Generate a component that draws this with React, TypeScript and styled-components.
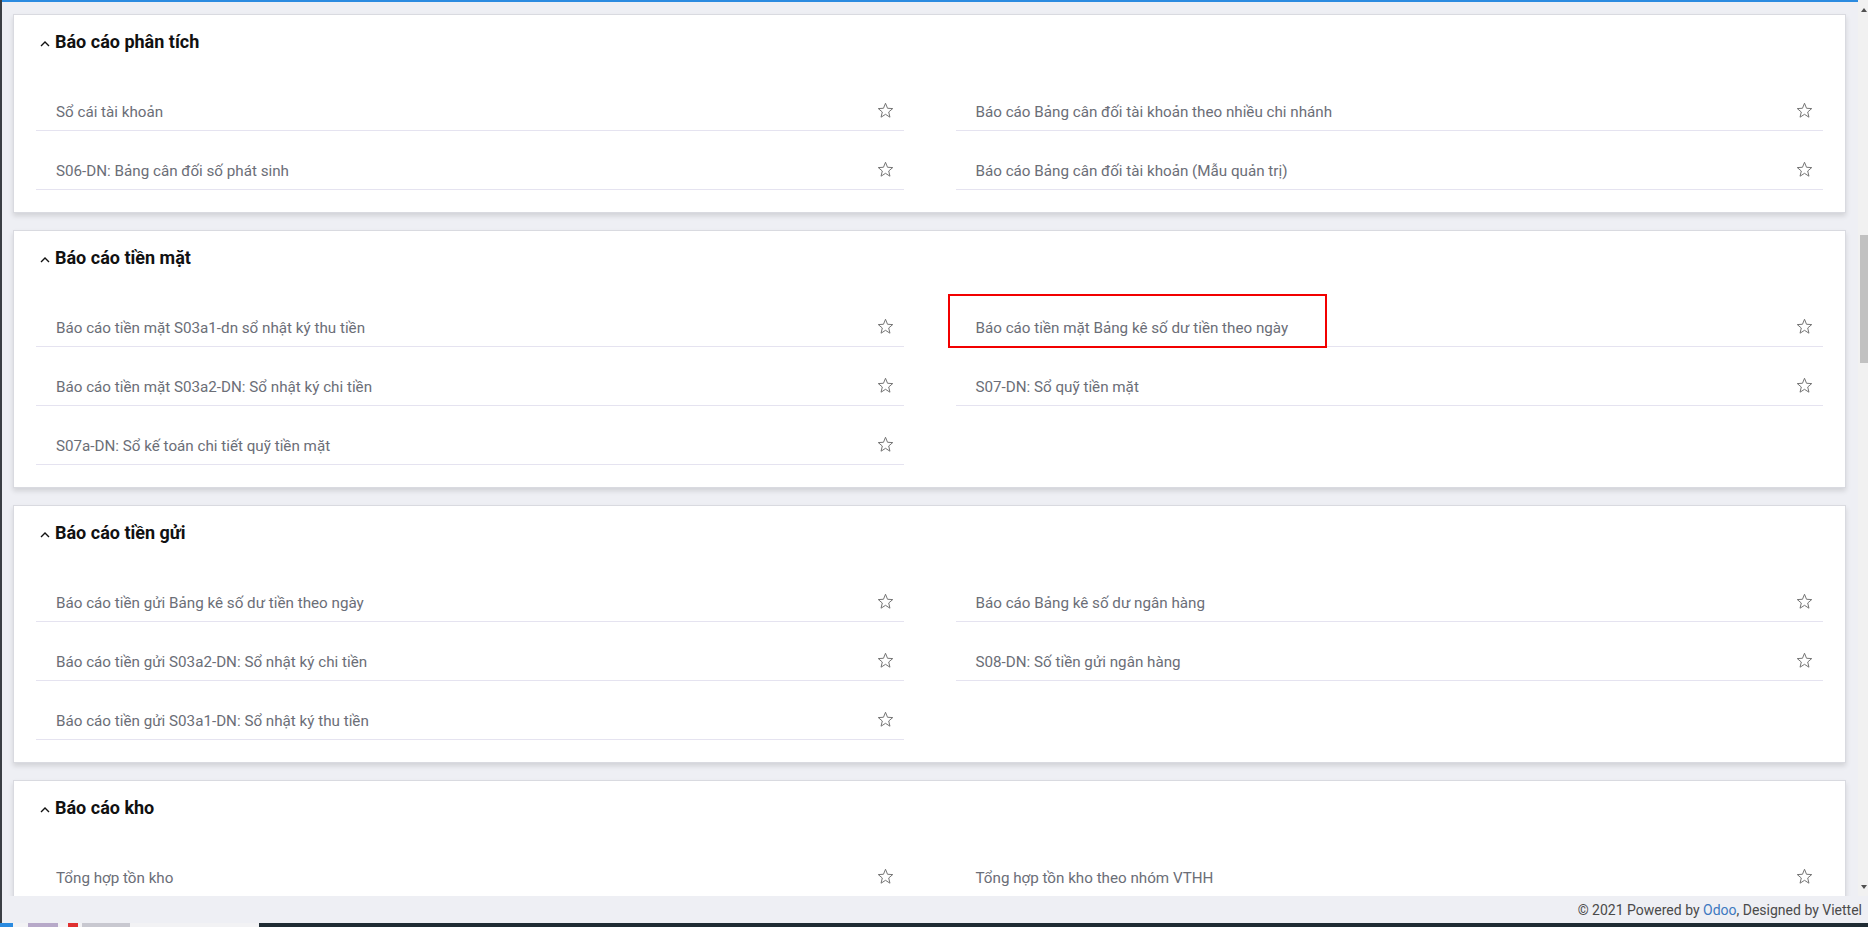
import React from "react";
import styled, { createGlobalStyle } from "styled-components";

const GlobalStyle = createGlobalStyle`
  html, body { margin: 0; padding: 0; }
  body { font-family: Roboto, "Noto Sans", Arial, sans-serif; background: #eeeff4; overflow: hidden; }
  * { box-sizing: border-box; }
`;

type Item = { label: string; highlight?: boolean };
type Section = { title: string; items: Item[] };

const sections: Section[] = [
  {
    title: "Báo cáo phân tích",
    items: [
      { label: "Sổ cái tài khoản" },
      { label: "Báo cáo Bảng cân đối tài khoản theo nhiều chi nhánh" },
      { label: "S06-DN: Bảng cân đối số phát sinh" },
      { label: "Báo cáo Bảng cân đối tài khoản (Mẫu quản trị)" },
    ],
  },
  {
    title: "Báo cáo tiền mặt",
    items: [
      { label: "Báo cáo tiền mặt S03a1-dn sổ nhật ký thu tiền" },
      { label: "Báo cáo tiền mặt Bảng kê số dư tiền theo ngày", highlight: true },
      { label: "Báo cáo tiền mặt S03a2-DN: Sổ nhật ký chi tiền" },
      { label: "S07-DN: Sổ quỹ tiền mặt" },
      { label: "S07a-DN: Sổ kế toán chi tiết quỹ tiền mặt" },
    ],
  },
  {
    title: "Báo cáo tiền gửi",
    items: [
      { label: "Báo cáo tiền gửi Bảng kê số dư tiền theo ngày" },
      { label: "Báo cáo Bảng kê số dư ngân hàng" },
      { label: "Báo cáo tiền gửi S03a2-DN: Sổ nhật ký chi tiền" },
      { label: "S08-DN: Số tiền gửi ngân hàng" },
      { label: "Báo cáo tiền gửi S03a1-DN: Sổ nhật ký thu tiền" },
    ],
  },
  {
    title: "Báo cáo kho",
    items: [
      { label: "Tổng hợp tồn kho" },
      { label: "Tổng hợp tồn kho theo nhóm VTHH" },
    ],
  },
];

const Page = styled.div`
  height: 927px;
  display: flex;
  flex-direction: column;
`;

const Frame = styled.div`
  flex: 1;
  display: flex;
  flex-direction: column;
  border-left: 2px solid #3b3f45;
  min-height: 0;
`;

const Main = styled.div`
  height: 896px;
  display: flex;
  min-height: 0;
`;

const Content = styled.div`
  flex: 1;
  overflow: hidden;
  border-top: 2px solid #2b8be0;
  padding: 12px 12px 0 11px;
  display: flex;
  flex-direction: column;
  gap: 17px;
`;

const ScrollBar = styled.div`
  width: 10px;
  background: #f1f1f1;
  display: flex;
  flex-direction: column;
  align-items: flex-end;
  padding-top: 8px;
`;

const Arrow = styled.div<{ $down?: boolean }>`
  width: 0;
  height: 0;
  margin-right: 1px;
  border-left: 3.5px solid transparent;
  border-right: 3.5px solid transparent;
  ${(p) =>
    p.$down
      ? "border-top: 4px solid #505050; margin-top: auto; margin-bottom: 7px;"
      : "border-bottom: 4px solid #505050;"}
`;

const Thumb = styled.div`
  width: 8px;
  height: 128px;
  margin-top: 223px;
  background: #c1c1c1;
`;

const Card = styled.section`
  flex-shrink: 0;
  background: #fff;
  border: 1px solid #d9dae0;
  box-shadow: 0 3px 5px rgba(0, 0, 0, 0.12);
  padding-bottom: 22px;
`;

const Header = styled.div`
  height: 57px;
  display: flex;
  align-items: flex-start;
  padding: 16px 0 0 26px;
  gap: 5px;
`;

const Title = styled.h2`
  margin: 0;
  font-size: 18px;
  line-height: 22px;
  font-weight: 700;
  color: #111;
`;

const Chevron = styled.svg`
  width: 10px;
  height: 7px;
  margin-top: 9px;
`;

const Grid = styled.div`
  display: grid;
  grid-template-columns: 1fr 1fr;
  column-gap: 52px;
  padding: 0 22px;
`;

const Row = styled.div`
  position: relative;
  height: 59px;
  border-bottom: 1px solid #e5e3f0;
  display: flex;
  align-items: flex-end;
  justify-content: space-between;
  padding: 0 10px 8px 20px;
`;

const Label = styled.span`
  font-size: 15.2px;
  line-height: 20px;
  color: #6b6e77;
  white-space: nowrap;
`;

const StarIcon = styled.svg`
  width: 17px;
  height: 17px;
  margin-bottom: 3px;
  flex-shrink: 0;
`;

const Highlight = styled.div`
  position: absolute;
  left: -8px;
  top: 6px;
  width: 379px;
  height: 54px;
  border: 2px solid #f20000;
  pointer-events: none;
`;

const Footer = styled.footer`
  height: 27px;
  display: flex;
  align-items: center;
  justify-content: flex-end;
  padding-right: 6px;
  font-size: 14px;
  color: #4a4a4a;
  background: #eeeff4;
`;

const OdooLink = styled.span`
  color: #3d78c0;
`;

const Taskbar = styled.div`
  height: 4px;
  display: flex;
`;

const TaskLight = styled.div`
  width: 259px;
  background: #f2f2f4;
  display: flex;
`;

const TaskChip = styled.div<{ $color: string; $w: number; $ml: number }>`
  width: ${(p) => p.$w}px;
  margin-left: ${(p) => p.$ml}px;
  background: ${(p) => p.$color};
`;

const TaskDark = styled.div`
  flex: 1;
  background: #1f2b33;
`;

const Star = () => (
  <StarIcon viewBox="0 0 16 16" fill="none">
    <polygon
      points="8,1.2 9.9,5.9 14.8,6.2 11,9.4 12.2,14.3 8,11.6 3.8,14.3 5,9.4 1.2,6.2 6.1,5.9"
      stroke="#6e6e6e"
      strokeWidth="0.9"
      strokeLinejoin="round"
    />
  </StarIcon>
);

const ReportRow = ({ item }: { item: Item }) => (
  <Row>
    <Label>{item.label}</Label>
    <Star />
    {item.highlight && <Highlight />}
  </Row>
);

const ReportCard = ({ section }: { section: Section }) => (
  <Card>
    <Header>
      <Chevron viewBox="0 0 10 7" fill="none">
        <polyline points="1,6 5,2 9,6" stroke="#111" strokeWidth="1.4" />
      </Chevron>
      <Title>{section.title}</Title>
    </Header>
    <Grid>
      {section.items.map((it) => (
        <ReportRow key={it.label} item={it} />
      ))}
    </Grid>
  </Card>
);

export default function App() {
  return (
    <Page>
      <GlobalStyle />
      <Frame>
        <Main>
          <Content>
            {sections.map((s) => (
              <ReportCard key={s.title} section={s} />
            ))}
          </Content>
          <ScrollBar>
            <Arrow />
            <Thumb />
            <Arrow $down />
          </ScrollBar>
        </Main>
        <Footer>
          © 2021 Powered by&nbsp;<OdooLink>Odoo</OdooLink>, Designed by Viettel
        </Footer>
      </Frame>
      <Taskbar>
        <TaskLight>
          <TaskChip $color="#2b8be0" $w={13} $ml={0} />
          <TaskChip $color="#b7a9c9" $w={30} $ml={15} />
          <TaskChip $color="#e03030" $w={10} $ml={10} />
          <TaskChip $color="#c8c8d0" $w={48} $ml={4} />
        </TaskLight>
        <TaskDark />
      </Taskbar>
    </Page>
  );
}
